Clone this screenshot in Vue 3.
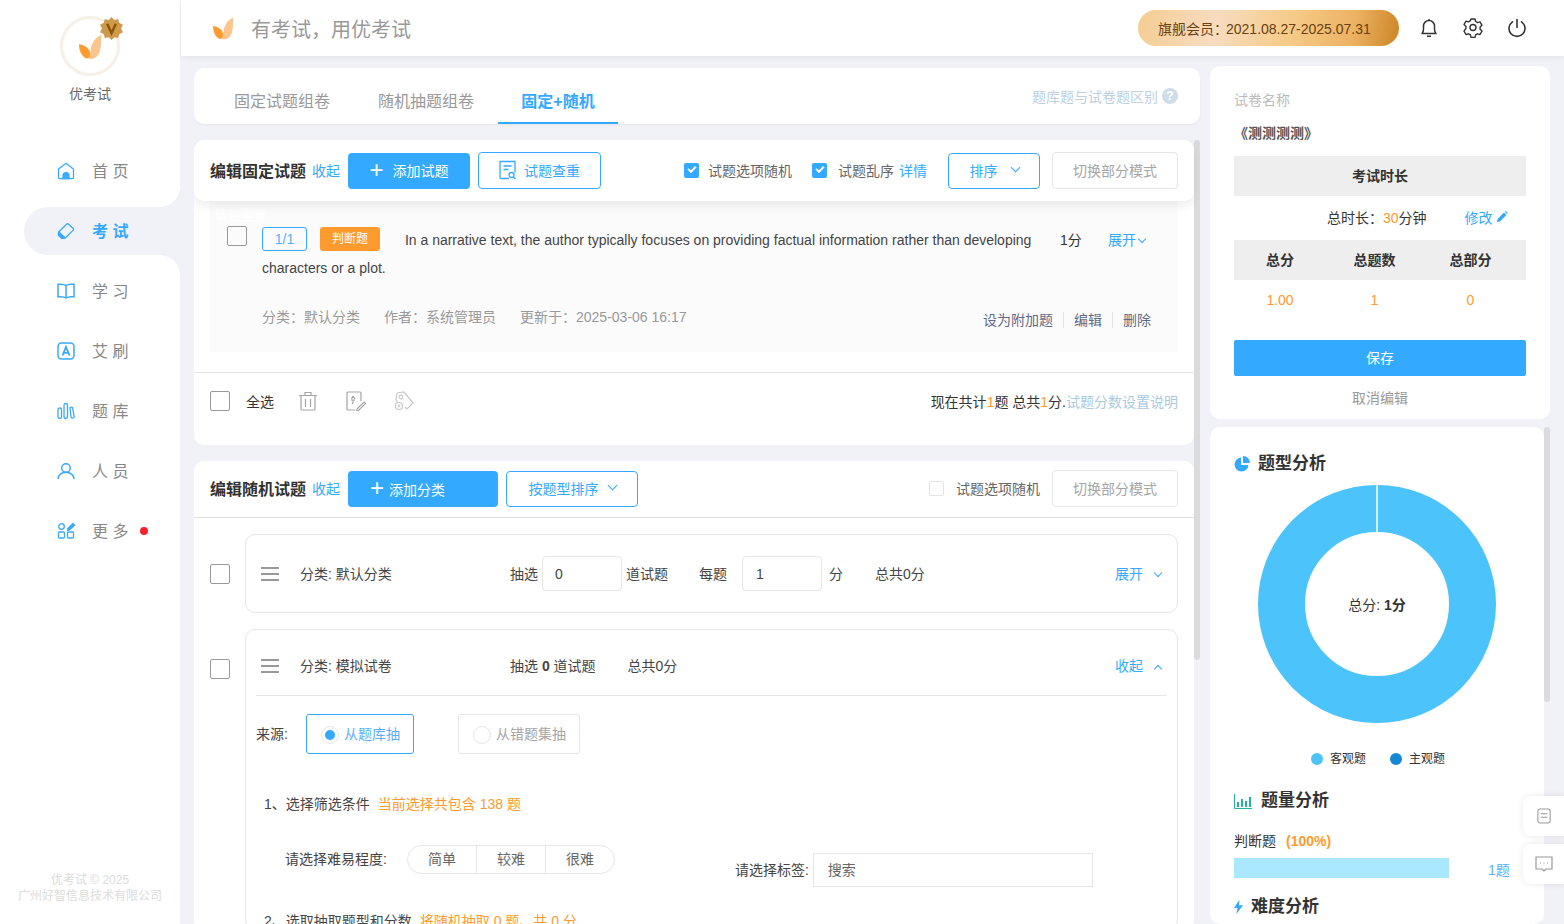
<script setup>
import { ref } from 'vue'

const activeTab = ref(2)
const tabs = ['固定试题组卷', '随机抽题组卷', '固定+随机']
const navItems = [
  { key: 'home', label: '首 页' },
  { key: 'exam', label: '考 试', active: true },
  { key: 'study', label: '学 习' },
  { key: 'brush', label: '艾 刷' },
  { key: 'bank', label: '题 库' },
  { key: 'user', label: '人 员' },
  { key: 'more', label: '更 多', dot: true },
]
</script>

<template>
  <div class="app">
    <aside class="sidebar">
      <div class="brand">
        <div class="avatar">
          <svg class="leaf" viewBox="0 0 24 26" width="22" height="26">
            <path d="M24 0c0 10 1 26-11 26-3 0-5-1-6-2 3 0 5-2 5.500-6C13 10 17 3 24 0z" fill="#fdc48d" />
            <path d="M0 10c5 .5 12 4 12 10 0 3-1.500 5-3.500 5.500C3 24 0 17 0 10z" fill="#ff9a2e" />
          </svg>
          <svg class="badge" viewBox="0 0 24 24" width="23" height="23">
            <path d="M12 0l3 3 4-1 1 4 4 2-2 4 2 4-4 2-1 4-4-1-3 3-3-3-4 1-1-4-4-2 2-4-2-4 4-2 1-4 4 1z" fill="#cf9a4c" />
            <path d="M7.500 7l4.500 10 4.500-10" fill="none" stroke="#8f5405" stroke-width="2.600" />
          </svg>
        </div>
        <div class="brand-name">优考试</div>
      </div>
      <nav class="nav">
        <div v-for="item in navItems" :key="item.key" class="nav-item" :class="{ active: item.active }">
          <svg class="nav-icon" viewBox="0 0 18 18" width="18" height="18" fill="none" stroke="#3aa9fb" stroke-width="1.300">
            <template v-if="item.key === 'home'">
              <path d="M1.500 7L9 1.200 16.500 7v8.500a1.200 1.200 0 0 1-1.200 1.200H2.700a1.200 1.200 0 0 1-1.200-1.200z" />
              <path d="M6 16.700v-3a3 3 0 0 1 6 0v3z" fill="#3aa9fb" />
            </template>
            <template v-else-if="item.key === 'exam'">
              <path d="M1.800 10L9.500 2.300a1.500 1.500 0 0 1 2.100 0l4.400 4a1.500 1.500 0 0 1 0 2.100L8.500 15.800a1.500 1.500 0 0 1-2.100 0l-4.600-3.700a1.500 1.500 0 0 1 0-2.100z" />
              <path d="M1.800 10l6 5.500-1 .8H4.500l-3-3z" fill="#3aa9fb" />
            </template>
            <template v-else-if="item.key === 'study'">
              <path d="M9 3.500C7.500 2.300 4 2 1 2.300v12.500c3-.3 6.500 0 8 1.200 1.500-1.200 5-1.500 8-1.200V2.300C14 2 10.500 2.300 9 3.500zM9 3.500V16" stroke-width="1.500" />
            </template>
            <template v-else-if="item.key === 'brush'">
              <rect x="1" y="1" width="16" height="16" rx="3.500" stroke-width="1.500" />
              <path d="M5.500 13.500L9 4.800l3.500 8.700M6.800 10.800h4.400" stroke-width="1.800" />
            </template>
            <template v-else-if="item.key === 'bank'">
              <rect x="1" y="6" width="3.500" height="10.500" rx="1.700" />
              <rect x="7" y="1.500" width="3.500" height="15" rx="1.700" />
              <path d="M13 5.500c1.200-.8 2.400-.3 2.700.8l1.500 8.500c.2 1.300-2.800 2-3.200.4z" />
            </template>
            <template v-else-if="item.key === 'user'">
              <circle cx="9" cy="6" r="4.300" stroke-width="1.500" />
              <path d="M1 17c0-4 3.500-6.700 8-6.700s8 2.700 8 6.700" stroke-width="1.500" />
            </template>
            <template v-else>
              <circle cx="4.500" cy="4.500" r="2.800" />
              <rect x="1.500" y="10" width="6" height="6" rx="1" />
              <rect x="10.500" y="10" width="6" height="6" rx="1" />
              <path d="M11 6.500l5-5 1.500 1.800-5 4.500-2 .5z" fill="#3aa9fb" />
            </template>
          </svg>
          <span class="nav-label">{{ item.label }}</span>
          <i v-if="item.dot" class="red-dot"></i>
        </div>
      </nav>
      <div class="copyright">
        <div>优考试 © 2025</div>
        <div>广州好智信息技术有限公司</div>
      </div>
    </aside>

    <div class="page">
      <header class="topbar">
        <svg viewBox="0 0 24 26" width="20" height="23">
          <path d="M24 0c0 10 1 26-11 26-3 0-5-1-6-2 3 0 5-2 5.500-6C13 10 17 3 24 0z" fill="#fdc48d" />
          <path d="M0 10c5 .5 12 4 12 10 0 3-1.500 5-3.500 5.500C3 24 0 17 0 10z" fill="#ff9a2e" />
        </svg>
        <span class="slogan">有考试，用优考试</span>
        <div class="vip">旗舰会员<span class="vip-colon">：</span>2021.08.27-2025.07.31</div>
        <svg class="top-icon" viewBox="0 0 20 20" width="20" height="20" fill="none" stroke="#333" stroke-width="1.500">
          <path d="M3 15.500c1.300-1 1.500-2.500 1.500-4.500V8a5.500 5.500 0 0 1 11 0v3c0 2 .2 3.500 1.500 4.500zM8 18.200h4M10 1v1" stroke-linejoin="round" />
        </svg>
        <svg class="top-icon" viewBox="0 0 20 20" width="20" height="20" fill="none" stroke="#333" stroke-width="1.400">
          <path d="M8 1.500h4l.6 2.500 1.900 1.100 2.500-.7 2 3.400-1.900 1.800v2.200l1.900 1.800-2 3.400-2.500-.7-1.900 1.100-.6 2.500H8l-.6-2.500-1.900-1.100-2.500.7-2-3.400L2.900 11V8.800L1 7l2-3.400 2.500.7L7.400 3.200z" stroke-linejoin="round" transform="translate(0 -.500)" />
          <circle cx="10" cy="9.500" r="3" />
        </svg>
        <svg class="top-icon" viewBox="0 0 20 20" width="20" height="20" fill="none" stroke="#333" stroke-width="1.600">
          <path d="M10 1.500v8M5.500 3.800a8 8 0 1 0 9 0" stroke-linecap="round" />
        </svg>
      </header>

      <div class="content">
        <main class="main">
          <div class="tabs-card">
            <div
              v-for="(tab, i) in tabs"
              :key="tab"
              class="tab"
              :class="{ on: activeTab === i }"
              @click="activeTab = i"
            >
              {{ tab }}
            </div>
            <div class="tabs-hint">
              题库题与试卷题区别
              <span class="help">?</span>
            </div>
          </div>

          <div class="scroller">
            <section class="card fixed-card">
              <div class="card-head shadowed">
                <span class="head-title">编辑固定试题</span>
                <a class="link fold">收起</a>
                <button class="btn primary add-q"><span class="plus">+</span>添加试题</button>
                <button class="btn outline dup">
                  <svg viewBox="0 0 18 20" width="18" height="20" fill="none" stroke="#33a9ff" stroke-width="1.300">
                    <path d="M10 18.500H2a1 1 0 0 1-1-1v-16h15v11M4.500 6h8M4.500 9.500h5" />
                    <circle cx="12.500" cy="15" r="2.500" />
                    <path d="M14.500 17l2 2" />
                  </svg>
                  试题查重
                </button>
                <div class="head-right">
                  <label class="tick"><i class="cb on"></i>试题选项随机</label>
                  <label class="tick tick-shuffle"><i class="cb on"></i>试题乱序</label>
                  <a class="link detail">详情</a>
                  <button class="btn outline sort">排序<span class="chev"></span></button>
                  <button class="btn ghost">切换部分模式</button>
                </div>
              </div>

              <div class="question">
                <span class="dup-note">该题重复</span>
                <i class="cb big q-check"></i>
                <div class="q-main">
                  <div class="q-top">
                    <div class="q-text">
                      <span class="tag-no">1/1</span>
                      <span class="tag-type">判断题</span>
                      In a narrative text, the author typically focuses on providing factual information rather than developing characters or a plot.
                    </div>
                    <span class="q-score">1分</span>
                    <a class="link q-open">展开<span class="chev small"></span></a>
                  </div>
                  <div class="q-bottom">
                    <span>分类：默认分类</span>
                    <span>作者：系统管理员</span>
                    <span>更新于：2025-03-06 16:17</span>
                    <div class="q-actions">
                      <a>设为附加题</a>
                      <a>编辑</a>
                      <a>删除</a>
                    </div>
                  </div>
                </div>
              </div>

              <div class="fixed-foot">
                <i class="cb big"></i>
                <span class="all">全选</span>
                <svg viewBox="0 0 20 20" width="20" height="20" fill="none" stroke="#a5a5a5" stroke-width="1.200">
                  <path d="M1 4.500h18M7 4V1.500h6V4M3 5v13a1 1 0 0 0 1 1h12a1 1 0 0 0 1-1V5M7.500 8v8M12.500 8v8" />
                </svg>
                <svg viewBox="0 0 20 20" width="20" height="20" fill="none" stroke="#a5a5a5" stroke-width="1.200">
                  <path d="M9 19H2a1 1 0 0 1-1-1V2a1 1 0 0 1 1-1h12a1 1 0 0 1 1 1v8M7 5l-1.500 3M7 5l2 3M5 9h4M7 9v3l-1 1" />
                  <path d="M11 18l7-7 1.500 1.500-7 7-2 .5z" />
                </svg>
                <svg viewBox="0 0 20 20" width="20" height="20" fill="none" stroke="#c8c8c8" stroke-width="1.200">
                  <path d="M3 2l7-1 9 11-6 6-2-2M3 2l-1 7 1.500 2" />
                  <circle cx="7" cy="6" r="1.800" />
                  <circle cx="5" cy="15" r="3.500" />
                  <path d="M3.500 15h3M5 13.500v3" />
                </svg>
                <div class="foot-right">
                  现在共计<em>1</em>题 总共<em>1</em>分.<a>试题分数设置说明</a>
                </div>
              </div>
            </section>

            <section class="card random-card">
              <div class="card-head lined">
                <span class="head-title">编辑随机试题</span>
                <a class="link fold">收起</a>
                <button class="btn primary add-cat"><span class="plus">+</span>添加分类</button>
                <button class="btn outline type-sort">按题型排序<span class="chev"></span></button>
                <div class="head-right">
                  <label class="tick plain"><i class="cb off"></i>试题选项随机</label>
                  <button class="btn ghost">切换部分模式</button>
                </div>
              </div>

              <div class="cat-row">
                <i class="cb big out-check"></i>
                <div class="cat-box">
                  <div class="cat-line tall">
                    <span class="burger"><i></i><i></i><i></i></span>
                    <span class="cat-name lift">分类: 默认分类</span>
                    <span class="lift">抽选</span>
                    <span class="num-input n1">0</span>
                    <span class="lift">道试题</span>
                    <span class="per lift">每题</span>
                    <span class="num-input n2">1</span>
                    <span class="unit lift">分</span>
                    <span class="sum lift">总共0分</span>
                    <a class="link cat-toggle lift">展开<span class="chev small"></span></a>
                  </div>
                </div>
              </div>

              <div class="cat-row">
                <i class="cb big out-check"></i>
                <div class="cat-box">
                  <div class="cat-line">
                    <span class="burger"><i></i><i></i><i></i></span>
                    <span class="cat-name lift">分类: 模拟试卷</span>
                    <span class="lift">抽选 <b>0</b> 道试题</span>
                    <span class="sum lift">总共0分</span>
                    <a class="link cat-toggle lift">收起<span class="chev small up"></span></a>
                  </div>
                  <div class="source">
                    <span class="source-label">来源:</span>
                    <div class="radio-btn on"><i class="radio"></i>从题库抽</div>
                    <div class="radio-btn"><i class="radio"></i>从错题集抽</div>
                  </div>
                  <div class="step">1、选择筛选条件<span class="hint">当前选择共包含 138 题</span></div>
                  <div class="filters">
                    <span>请选择难易程度:</span>
                    <div class="segment"><span>简单</span><span>较难</span><span>很难</span></div>
                    <div class="tag-filter">
                      <span>请选择标签:</span>
                      <div class="search-box">搜索</div>
                    </div>
                  </div>
                  <div class="step step2">2、选取抽取题型和分数<span class="hint">将随机抽取 0 题、共 0 分</span></div>
                </div>
              </div>
            </section>
            <div class="scroll-thumb"></div>
          </div>
        </main>

        <aside class="side">
          <div class="panel summary">
            <div class="paper-label">试卷名称</div>
            <div class="paper-name">《测测测测》</div>
            <div class="grey-bar">考试时长</div>
            <div class="duration">
              <span>总时长：<em>30</em>分钟</span>
              <a class="link edit">修改
                <svg viewBox="0 0 12 12" width="12" height="12"><path d="M1 11l.6-3L8 1.600 10.400 4 4 10.400zM8.800.8l1-.8 2 2-.8 1z" fill="#33a9ff" /></svg>
              </a>
            </div>
            <div class="stats head"><span>总分</span><span>总题数</span><span>总部分</span></div>
            <div class="stats vals"><span>1.00</span><span>1</span><span>0</span></div>
            <button class="save">保存</button>
            <div class="cancel">取消编辑</div>
          </div>

          <div class="panel analysis">
            <h3 class="an-title">
              <svg viewBox="0 0 16 16" width="16" height="16"><path d="M7 1.500A7 7 0 1 0 14.500 9H7z" fill="#33a9ff" /><path d="M9 0a7 7 0 0 1 7 7H9z" fill="#33a9ff" /></svg>
              题型分析
            </h3>
            <svg class="donut" viewBox="0 0 240 240" width="240" height="240">
              <circle cx="120" cy="120" r="95.500" fill="none" stroke="#4dc3fb" stroke-width="47" />
              <path d="M120 1v47" stroke="#fff" stroke-width="1.500" />
              <text x="120" y="126" text-anchor="middle" class="donut-text">总分: <tspan font-weight="700">1分</tspan></text>
            </svg>
            <div class="legend">
              <span><i class="light"></i>客观题</span>
              <span><i class="deep"></i>主观题</span>
            </div>
            <h3 class="an-title an-qty">
              <svg viewBox="0 0 18 16" width="18" height="16" fill="none" stroke-width="2">
                <path d="M.5 1v14.500H18" stroke="#22b3a6" stroke-width="1" />
                <path d="M4 14V9M8 14V6M12 14V8M16 14V4" stroke="#22b3a6" />
              </svg>
              题量分析
            </h3>
            <div class="qty-label">判断题<b>(100%)</b></div>
            <div class="qty-row">
              <div class="qty-bar" style="width: 215px"></div>
              <span class="qty-num">1题</span>
            </div>
            <h3 class="an-title an-diff">
              <svg viewBox="0 0 10 16" width="9" height="16"><path d="M6 0L0 9h4l-1.500 7L10 6H5.500z" fill="#33a9ff" /></svg>
              难度分析
            </h3>
            <div class="side-thumb"></div>
          </div>
        </aside>
      </div>
    </div>

    <div class="float-btn float-note">
      <svg viewBox="0 0 16 18" width="14" height="16" fill="none" stroke="#999" stroke-width="1.200">
        <rect x="1" y="1" width="14" height="16" rx="2.500" /><path d="M4 6.500h8M4 10.500h8" />
      </svg>
    </div>
    <div class="float-btn float-chat">
      <svg viewBox="0 0 18 16" width="18" height="16" fill="none" stroke="#999" stroke-width="1.200">
        <path d="M1 1h16v12h-6l-2 2-2-2H1z" /><path d="M5 7h1M8.500 7h1M12 7h1" />
      </svg>
    </div>
  </div>
</template>

<style>
html,
body {
  margin: 0;
  height: 100%;
  overflow: hidden;
}
</style>

<style scoped>
.app {
  display: flex;
  height: 924px;
  overflow: hidden;
  background: #f0f2f7;
  font-family: 'Liberation Sans', 'Noto Sans CJK SC', sans-serif;
  font-size: 14px;
  color: #333;
  position: relative;
}
em,
i {
  font-style: normal;
}

/* sidebar */
.sidebar {
  width: 180px;
  flex: none;
  background: #fff;
  display: flex;
  flex-direction: column;
}
.brand {
  height: 141px;
  flex: none;
  display: flex;
  flex-direction: column;
  align-items: center;
  padding-top: 16px;
  box-sizing: border-box;
}
.avatar {
  width: 60px;
  height: 60px;
  box-sizing: border-box;
  border: 3px solid #f7f0e6;
  border-radius: 50%;
  display: flex;
  align-items: center;
  justify-content: center;
  position: relative;
  background: #fff;
}
.leaf {
  margin-top: 1px;
}
.badge {
  position: absolute;
  top: -2px;
  right: -6px;
}
.brand-name {
  margin-top: 9px;
  font-size: 14px;
  line-height: 18px;
  color: #666;
}
.nav-item {
  height: 60px;
  display: flex;
  align-items: center;
  padding-left: 57px;
  color: #888;
  font-size: 16px;
  position: relative;
}
.nav-item.active {
  height: 48px;
  margin: 6px 0 6px 24px;
  padding-left: 33px;
  background: #f0f2f7;
  border-radius: 24px 0 0 24px;
  color: #33a9ff;
  font-weight: 700;
}
.nav-item.active::before,
.nav-item.active::after {
  content: '';
  position: absolute;
  right: 0;
  width: 20px;
  height: 20px;
}
.nav-item.active::before {
  top: -20px;
  background: radial-gradient(circle at 0 0, #fff 19.5px, #f0f2f7 20px);
}
.nav-item.active::after {
  bottom: -20px;
  background: radial-gradient(circle at 0 100%, #fff 19.5px, #f0f2f7 20px);
}
.nav-icon {
  flex: none;
}
.nav-label {
  margin: -2px 0 0 17px;
  white-space: pre;
}
.red-dot {
  width: 8px;
  height: 8px;
  border-radius: 50%;
  background: #f5222d;
  margin-left: 12px;
}
.copyright {
  margin-top: auto;
  padding-bottom: 20px;
  text-align: center;
  font-size: 12px;
  line-height: 16px;
  color: #dcdcdc;
  white-space: nowrap;
}

/* top bar */
.page {
  flex: 1;
  min-width: 0;
  display: flex;
  flex-direction: column;
}
.topbar {
  height: 56px;
  flex: none;
  margin-left: 1px;
  padding: 0 37px 0 32px;
  background: #fff;
  display: flex;
  align-items: center;
  box-shadow: 0 2px 6px rgba(0, 0, 0, 0.06);
  position: relative;
  z-index: 3;
}
.slogan {
  margin-left: 18px;
  font-size: 20px;
  color: #999;
}
.vip {
  margin-left: auto;
  width: 261px;
  height: 36px;
  box-sizing: border-box;
  padding-left: 20px;
  line-height: 38px;
  border-radius: 18px;
  font-size: 14px;
  color: #6b3f10;
  white-space: nowrap;
  background: linear-gradient(100deg, #f5cd92 0%, #f8dcc0 30%, #f6cb89 58%, #ecb263 82%, #cc8524 100%);
}
.vip-colon {
  margin-right: -2px;
}
.top-icon {
  margin-left: 24px;
}
.vip + .top-icon {
  margin-left: 20px;
}

/* main column */
.content {
  flex: 1;
  min-height: 0;
  display: flex;
  padding-left: 14px;
}
.main {
  width: 1006px;
  flex: none;
  display: flex;
  flex-direction: column;
  padding-top: 12px;
  gap: 16px;
  min-height: 0;
}
.tabs-card {
  height: 56px;
  flex: none;
  background: #fff;
  border-radius: 10px;
  box-sizing: border-box;
  padding-left: 16px;
  display: flex;
  align-items: stretch;
  box-shadow: 0 1px 2px rgba(0, 0, 0, 0.05);
}
.tab {
  width: 144px;
  height: 56px;
  box-sizing: border-box;
  font-size: 16px;
  color: #999;
  text-align: center;
  line-height: 68px;
  white-space: nowrap;
}
.tab.on {
  width: 120px;
  font-weight: 700;
  color: #33a9ff;
  border-bottom: 2px solid #33a9ff;
}
.tabs-hint {
  margin-left: auto;
  margin-right: 22px;
  display: flex;
  align-items: center;
  gap: 4px;
  height: 56px;
  font-size: 14px;
  color: #bdd0e0;
}
.help {
  width: 16px;
  height: 16px;
  border-radius: 50%;
  background: #cfdde9;
  color: #fff;
  font-size: 12px;
  font-weight: 700;
  text-align: center;
  line-height: 16px;
}
.scroller {
  flex: 1;
  min-height: 0;
  overflow: hidden;
  position: relative;
  padding-right: 6px;
  display: flex;
  flex-direction: column;
  gap: 16px;
}
.scroll-thumb {
  position: absolute;
  right: 0;
  top: 0;
  width: 6px;
  height: 520px;
  background: #d9dbdf;
  border-radius: 3px;
}
.card {
  background: #fff;
  border-radius: 10px;
  flex: none;
}
.card-head {
  display: flex;
  align-items: center;
  padding: 0 16px;
  background: #fff;
  border-radius: 10px 10px 0 0;
  position: relative;
}
.shadowed {
  height: 61px;
  box-shadow: 0 4px 12px rgba(0, 0, 0, 0.08);
  z-index: 1;
  border-radius: 10px;
}
.lined {
  height: 57px;
  border-bottom: 1px solid #e0e0e0;
  box-sizing: border-box;
  padding-bottom: 1px;
}
.head-title {
  font-size: 16px;
  font-weight: 700;
  color: #333;
  white-space: nowrap;
  margin-top: -2px;
}
.link {
  color: #33a9ff;
  text-decoration: none;
}
.fold {
  font-size: 14px;
  margin: -2px 0 0 6px;
  white-space: nowrap;
}
.btn {
  font: inherit;
  font-size: 14px;
  height: 36px;
  border-radius: 4px;
  box-sizing: border-box;
  cursor: pointer;
  white-space: nowrap;
  display: inline-flex;
  align-items: center;
  justify-content: center;
  padding: 0 0 2px;
}
.primary {
  background: #33a9ff;
  color: #fff;
  border: 0;
}
.outline {
  background: #fff;
  color: #33a9ff;
  border: 1px solid #33a9ff;
}
.ghost {
  width: 126px;
  height: 37px;
  background: #fff;
  color: #a5a5a5;
  border: 1px solid #e6e6e6;
}
.plus {
  font-size: 24px;
  font-weight: 300;
  line-height: 1;
  margin-right: 9px;
}
.add-q {
  width: 122px;
  margin-left: 8px;
}
.dup {
  width: 123px;
  height: 37px;
  margin-left: 8px;
  gap: 7px;
}
.head-right {
  margin-left: auto;
  display: flex;
  align-items: center;
  color: #666;
  font-size: 14px;
}
.tick {
  display: flex;
  align-items: center;
  white-space: nowrap;
  padding-bottom: 2px;
}
.tick .cb {
  margin: 2px 9px 0 0;
}
.tick-shuffle {
  margin-left: 20px;
}
.tick-shuffle .cb {
  margin-right: 11px;
}
.tick.plain {
  margin-right: 12px;
}
.tick.plain .cb {
  margin-right: 12px;
}
.detail {
  margin: -2px 0 0 5px;
  white-space: nowrap;
}
.sort {
  width: 92px;
  margin: 0 12px 0 21px;
}
.cb {
  display: block;
  flex: none;
  width: 15px;
  height: 15px;
  box-sizing: border-box;
  border-radius: 2px;
  position: relative;
}
.cb.on {
  background: #33a9ff;
}
.cb.on::after {
  content: '';
  position: absolute;
  left: 4px;
  top: 3px;
  width: 6px;
  height: 3px;
  border-left: 2px solid #fff;
  border-bottom: 2px solid #fff;
  transform: rotate(-45deg);
}
.cb.off {
  border: 1px solid #e4e4e4;
}
.cb.big {
  width: 20px;
  height: 20px;
  border: 1px solid #999;
}
.chev {
  display: inline-block;
  width: 6px;
  height: 6px;
  margin-left: 14px;
  margin-top: -4px;
  border-right: 1px solid currentColor;
  border-bottom: 1px solid currentColor;
  transform: rotate(45deg);
}
.chev.small {
  width: 5px;
  height: 5px;
  margin-left: 3px;
  vertical-align: 3px;
}
.chev.up {
  vertical-align: -1px;
  transform: rotate(225deg);
}

/* fixed question */
.question {
  margin: 0 16px;
  height: 151px;
  background: #fbfbfc;
  box-sizing: border-box;
  padding: 25px 27px 0 17px;
  display: flex;
  position: relative;
}
.dup-note {
  position: absolute;
  left: 5px;
  top: 3px;
  font-size: 13px;
  color: #fff;
}
.q-check {
  margin-right: 15px;
}
.q-main {
  flex: 1;
  min-width: 0;
}
.q-top {
  display: flex;
  align-items: flex-start;
}
.q-text {
  width: 790px;
  flex: none;
  font-size: 14px;
  line-height: 28px;
  color: #444;
}
.tag-no,
.tag-type {
  display: inline-block;
  height: 24px;
  box-sizing: border-box;
  line-height: 22px;
  text-align: center;
  border-radius: 3px;
  font-size: 12px;
  vertical-align: top;
  margin-top: 1px;
}
.tag-no {
  width: 45px;
  border: 1px solid #33a9ff;
  color: #5baeff;
  margin-right: 13px;
  font-size: 14px;
}
.tag-type {
  width: 60px;
  line-height: 24px;
  background: #ff9a2e;
  color: #fff;
  margin-right: 21px;
}
.q-score {
  margin: 0 0 0 8px;
  width: 48px;
  flex: none;
  line-height: 28px;
}
.q-open {
  font-size: 14px;
  line-height: 28px;
  white-space: nowrap;
}
.q-bottom {
  margin-top: 21px;
  display: flex;
  gap: 24px;
  color: #999;
  white-space: nowrap;
  line-height: 28px;
}
.q-actions {
  margin-left: auto;
  display: flex;
  align-items: center;
  color: #5f6b85;
  font-size: 14px;
  padding-top: 5px;
}
.q-actions a {
  padding: 0 10px;
  line-height: 16px;
  border-left: 1px solid #e4e4e4;
}
.q-actions a:first-child {
  border-left: 0;
}
.q-actions a:last-child {
  padding-right: 0;
}
.fixed-foot {
  margin-top: 20px;
  height: 73px;
  border-top: 1px solid #e4e4e4;
  box-sizing: border-box;
  padding: 18px 16px 0;
  display: flex;
  align-items: flex-start;
}
.all {
  margin: 0 24px 0 16px;
  line-height: 22px;
  font-size: 14px;
  white-space: nowrap;
}
.fixed-foot svg {
  margin-right: 28px;
}
.foot-right {
  margin-left: auto;
  font-size: 14px;
  line-height: 22px;
  color: #333;
  white-space: nowrap;
}
.foot-right em {
  color: #ff9a2e;
}
.foot-right a {
  color: #a9c9e2;
}

/* random section */
.add-cat {
  width: 150px;
  margin-left: 8px;
  justify-content: flex-start;
  padding: 0 0 0 22px;
}
.add-cat .plus {
  margin: -2px 5px 0 0;
}
.type-sort {
  width: 132px;
  margin-left: 8px;
}
.type-sort .chev {
  margin-left: 10px;
}
.cat-row {
  display: flex;
  padding: 16px 16px 0;
}
.out-check {
  margin: 30px 15px 0 0;
}
.cat-box {
  flex: 1;
  min-width: 0;
  border: 1px solid #e6e6e6;
  border-radius: 10px;
  box-sizing: border-box;
  padding: 0 10px;
  font-size: 14px;
  color: #444;
}
.cat-line {
  height: 66px;
  box-sizing: border-box;
  padding: 6px 0 0 5px;
  display: flex;
  align-items: center;
  border-bottom: 1px solid #e6e6e6;
  white-space: nowrap;
}
.cat-line.tall {
  height: 77px;
  padding-top: 0;
  border-bottom: 0;
}
.lift {
  margin-top: -2px;
}
.burger {
  width: 18px;
  display: flex;
  flex-direction: column;
  gap: 4px;
  margin-right: 21px;
}
.burger i {
  height: 2px;
  background: #999;
}
.cat-name {
  width: 210px;
  flex: none;
}
.num-input {
  width: 80px;
  height: 35px;
  line-height: 35px;
  box-sizing: border-box;
  border: 1px solid #e6e6e6;
  border-radius: 4px;
  padding-left: 12px;
  margin: 0 4px;
  font-size: 14px;
}
.per {
  margin-left: 31px;
  margin-right: 15px;
}
.n2 {
  margin: 0;
  padding-left: 13px;
}
.unit {
  margin-left: 7px;
}
.sum {
  margin-left: 32px;
}
.cat-toggle {
  margin-left: auto;
  margin-right: 6px;
}
.cat-toggle .chev {
  margin-left: 12px;
}
.source {
  display: flex;
  align-items: center;
  margin-top: 18px;
}
.source-label {
  width: 50px;
  flex: none;
  margin-top: -3px;
}
.radio-btn {
  height: 40px;
  box-sizing: border-box;
  border: 1px solid #e6e6e6;
  border-radius: 3px;
  padding: 0 13px 3px 14px;
  display: flex;
  align-items: center;
  color: #a5a5a5;
  margin-right: 44px;
  white-space: nowrap;
}
.radio-btn.on {
  border-color: #33a9ff;
  color: #5baeff;
}
.radio {
  flex: none;
  width: 18px;
  height: 18px;
  box-sizing: border-box;
  border-radius: 50%;
  border: 1px solid #e6e6e6;
  margin: 4px 5px 0 0;
  position: relative;
}
.radio-btn.on .radio::after {
  content: '';
  position: absolute;
  left: 3px;
  top: 3px;
  width: 10px;
  height: 10px;
  border-radius: 50%;
  background: #33a9ff;
}
.step {
  margin: 42px 0 0 8px;
  line-height: 16px;
  white-space: nowrap;
}
.hint {
  margin-left: 8px;
  color: #ff9a2e;
}
.filters {
  margin: 33px 0 0 29px;
  display: flex;
  align-items: flex-start;
  line-height: 29px;
  white-space: nowrap;
}
.segment {
  margin-left: 20px;
  width: 208px;
  height: 29px;
  box-sizing: border-box;
  border: 1px solid #e6e6e6;
  border-radius: 15px;
  display: flex;
  color: #666;
  line-height: 27px;
}
.segment span {
  flex: 1;
  text-align: center;
  border-left: 1px solid #e6e6e6;
}
.segment span:first-child {
  border-left: 0;
}
.tag-filter {
  margin-left: 120px;
  margin-top: 8px;
  display: flex;
  align-items: center;
}
.search-box {
  width: 280px;
  height: 34px;
  margin-left: 4px;
  box-sizing: border-box;
  border: 1px solid #e6e6e6;
  padding-left: 14px;
  line-height: 33px;
  color: #666;
}
.step2 {
  margin-top: 26px;
}

/* right column */
.side {
  margin-left: 10px;
  width: 340px;
  flex: none;
  padding-top: 10px;
  display: flex;
  flex-direction: column;
  gap: 8px;
}
.panel {
  background: #fff;
  border-radius: 10px;
  box-sizing: border-box;
}
.summary {
  height: 353px;
  flex: none;
  padding: 24px 24px 0;
  font-size: 14px;
}
.paper-label {
  color: #bbb;
  line-height: 20px;
}
.paper-name {
  margin-top: 13px;
  font-weight: 700;
  color: #555;
  line-height: 20px;
}
.grey-bar {
  margin-top: 13px;
  height: 40px;
  background: #eee;
  text-align: center;
  line-height: 40px;
  font-weight: 700;
}
.duration {
  height: 44px;
  box-sizing: border-box;
  padding: 0 0 2px 93px;
  display: flex;
  align-items: center;
  white-space: nowrap;
}
.duration em {
  color: #ff9a2e;
}
.edit {
  margin-left: 38px;
  display: inline-flex;
  align-items: center;
  gap: 3px;
}
.stats {
  display: grid;
  grid-template-columns: 92px 97px 95px;
  text-align: center;
  height: 40px;
  line-height: 40px;
}
.stats.head {
  background: #eee;
  font-weight: 700;
}
.stats.vals {
  color: #ff9a2e;
}
.save {
  display: block;
  width: 100%;
  margin-top: 20px;
  height: 36px;
  border: 0;
  border-radius: 2px;
  background: #33a9ff;
  color: #fff;
  font: inherit;
  font-size: 14px;
  line-height: 34px;
}
.cancel {
  margin-top: 14px;
  text-align: center;
  color: #999;
  line-height: 16px;
}
.analysis {
  flex: 1;
  min-height: 0;
  width: 334px;
  padding: 25px 24px 0;
  position: relative;
  overflow: visible;
}
.an-title {
  margin: 0;
  font-size: 17px;
  font-weight: 700;
  color: #333;
  display: flex;
  align-items: center;
  gap: 8px;
  line-height: 24px;
}
.donut {
  display: block;
  margin: 8px 0 0 23px;
}
.donut-text {
  font-size: 14px;
  fill: #333;
}
.legend {
  margin-top: 27px;
  display: flex;
  justify-content: center;
  gap: 24px;
  font-size: 12px;
  padding-left: 2px;
  line-height: 16px;
}
.legend span {
  display: flex;
  align-items: center;
  gap: 7px;
}
.legend i {
  width: 12px;
  height: 12px;
  border-radius: 50%;
}
.light {
  background: #4dc3fb;
}
.deep {
  background: #1488d4;
}
.an-qty {
  margin-top: 22px;
  gap: 9px;
}
.qty-label {
  margin-top: 19px;
  font-size: 14px;
  line-height: 18px;
}
.qty-label b {
  margin-left: 10px;
  color: #ff9a2e;
}
.qty-row {
  margin-top: 7px;
  display: flex;
  align-items: center;
}
.qty-bar {
  height: 20px;
  background: #a9e8ff;
}
.qty-num {
  margin-left: 39px;
  color: #5baeff;
  padding-top: 2px;
}
.an-diff {
  margin-top: 16px;
}
.side-thumb {
  position: absolute;
  right: -6px;
  top: 0;
  width: 6px;
  height: 275px;
  border-radius: 3px;
  background: #d9dbdf;
}
.float-btn {
  position: absolute;
  left: 1523px;
  width: 42px;
  height: 40px;
  border-radius: 8px 0 0 8px;
  background: #fff;
  box-shadow: 0 0 6px rgba(0, 0, 0, 0.1);
  display: flex;
  align-items: center;
  justify-content: center;
  box-sizing: border-box;
}
.float-note {
  top: 796px;
}
.float-chat {
  top: 844px;
}
</style>
